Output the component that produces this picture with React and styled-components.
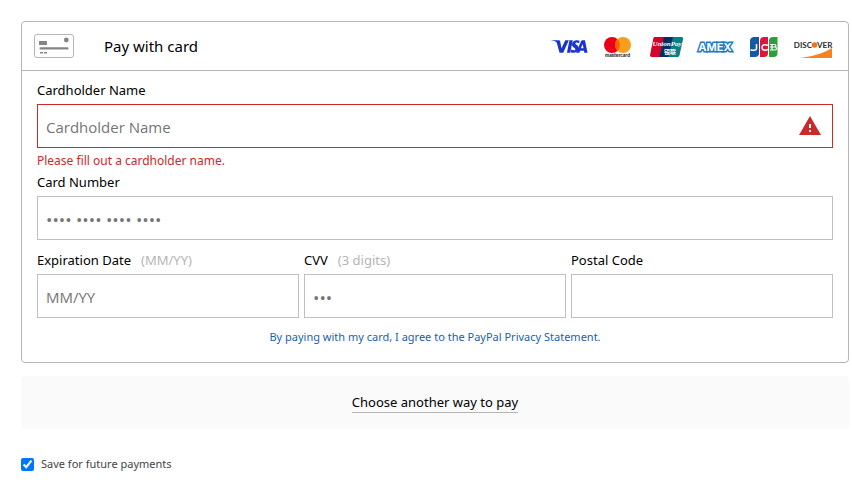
import React from 'react'
import styled, { createGlobalStyle } from 'styled-components'

const GlobalStyle = createGlobalStyle`
	* {
		box-sizing: border-box;
	}

	body {
		margin: 0;
		background: #fff;
		color: #000;
		font-family: 'Noto Sans', 'Open Sans', sans-serif;
		font-size: 13px;
	}
`

const Page = styled.main`
	padding: 21px 3px 14px 21px;
`

const Sheet = styled.form`
	border: 1px solid #b5b5b5;
	border-radius: 4px;
`

const SheetHeader = styled.header`
	display: flex;
	align-items: center;
	height: 49px;
	padding: 0 15px 0 12px;
	border-bottom: 1px solid #b5b5b5;
`

const Title = styled.h1`
	flex: 1;
	margin: 0 0 0 30px;
	font-size: 15px;
	font-weight: 400;
	line-height: 24px;
`

const Brands = styled.div`
	display: flex;
	gap: 9px;

	svg {
		display: block;
		width: 40px;
		height: 24px;
	}
`

const SheetBody = styled.div`
	padding: 11px 15px 19px;
`

const Row = styled.div`
	display: grid;
	grid-template-columns: repeat(3, 1fr);
	gap: 5px;
`

const FieldGroup = styled.div`
	margin-bottom: ${({ $tight }) => $tight ? '4px' : '12px'};
`

const Label = styled.label`
	display: flex;
	align-items: baseline;
	height: 22px;
	font-size: 13px;
	line-height: 16px;
	white-space: nowrap;
`

const Hint = styled.span`
	margin-left: 10px;
	color: #b5b5b5;
`

const InputBox = styled.div`
	position: relative;
`

const Input = styled.input`
	display: block;
	width: 100%;
	height: 44px;
	padding: 2px 8px 0;
	border: 1px solid ${({ $invalid }) => $invalid ? '#ca2a2a' : '#bfbfbf'};
	border-radius: 0;
	outline: none;
	background: #fff;
	font-family: 'Open Sans', sans-serif;
	font-size: ${({ $masked }) => $masked ? '17px' : '15px'};
	color: #000;

	&::placeholder {
		color: #757575;
		opacity: 1;
	}
`

const ErrorIcon = styled.svg`
	position: absolute;
	top: 12px;
	right: 12px;
	width: 22px;
	height: 19px;
`

const ErrorMessage = styled.div`
	padding-top: 4px;
	font-size: 12px;
	line-height: 18px;
	color: #ca2a2a;
`

const Legal = styled.div`
	font-size: 11px;
	line-height: 13px;
	text-align: center;

	a {
		color: #1a5fa8;
		text-decoration: none;
	}
`

const Toggle = styled.button`
	display: block;
	width: 100%;
	height: 53px;
	margin-top: 13px;
	padding: 0;
	border: 0;
	border-radius: 4px;
	background: #fafafa;
	color: #000;
	font-family: inherit;
	font-size: 13px;

	span {
		display: inline-block;
		line-height: 19px;
		border-bottom: 1px solid #b5b5b5;
	}
`

const SaveOption = styled.label`
	display: flex;
	align-items: center;
	gap: 7px;
	margin-top: 26px;
	font-size: 11px;
	line-height: 18px;
	color: #444;

	input {
		width: 13px;
		height: 13px;
		margin: 0;
		accent-color: #0075ff;
	}
`

const CardIcon = () => (
	<svg width='40' height='24' viewBox='0 0 40 24' aria-hidden='true'>
		<rect x='.5' y='.5' width='39' height='23' rx='2.5' fill='#fff' stroke='#b5b5b5' />
		<g fill='#858585'>
			<rect x='5' y='7' width='8' height='4' rx='.5' />
			<circle cx='32.3' cy='6' r='2.4' />
			<rect x='5.5' y='13.2' width='29' height='2.2' rx='1' />
			<path d='M6 18h3v1.4H6zM10 18h3v1.4h-3z' />
		</g>
	</svg>
)

const Visa = () => (
	<svg viewBox='0 0 42 24' role='img' aria-label='Visa'>
		<g fill='#1a35cb'>
			<path d='M3.5 6h7.600c1 0 1.500.5 1.700 1.400l1.400 7L18.100 6h3.800L16 19h-3.900L9.200 8.600C8.900 7.500 6.300 6.400 3.500 6.300z' />
			<path d='M22.500 6H26l-2.600 13h-3.500zM36 6h2.800l2.700 13h-3.300l-.4-2h-4l-.9 2h-3.500l5.200-11.800c.3-.8.8-1.200 1.400-1.200zm.4 3.900-1.800 4.400h2.700z' />
			<path d='M33.200 6.400 32.600 9c-2-.9-3.900-.7-3.900.4 0 1.200 3.400 1.600 3.400 4.800 0 4.400-4.900 5.900-8.300 4.400l.6-2.800c2.100 1.200 4.300 1 4.300-.5 0-1.600-3.500-1.700-3.500-4.900 0-4 4.700-5.400 8-4z' />
		</g>
	</svg>
)

const Mastercard = () => (
	<svg viewBox='0 0 40 24' role='img' aria-label='Mastercard'>
		<circle cx='15' cy='11' r='8' fill='#eb001b' />
		<circle cx='26' cy='11' r='8' fill='#f79e1b' />
		<path d='M20.5 5.2a8 8 0 0 1 0 11.6 8 8 0 0 1 0-11.6z' fill='#ff5f00' />
		<text x='20.5' y='23' textAnchor='middle' fontFamily='Lato' fontSize='5' fontWeight='900' fill='#231f20'>mastercard</text>
	</svg>
)

const UnionPay = () => (
	<svg viewBox='0 0 40 24' role='img' aria-label='UnionPay'>
		<path d='M9 3h11l-4.5 20H6c-1.5 0-2.2-.8-1.9-2.2L7.3 4.5C7.5 3.5 8.1 3 9 3z' fill='#d10429' />
		<path d='M18 3h10l-4.5 20h-10z' fill='#022e64' />
		<path d='M27 3h8.5c1.3 0 1.9.8 1.6 2l-3.6 16.2c-.3 1.2-1 1.8-2.2 1.8h-9z' fill='#077f84' />
		<text x='21' y='12' textAnchor='middle' fontFamily='Liberation Serif' fontSize='7' fontStyle='italic' fontWeight='700' fill='#fff'>UnionPay</text>
		<text x='24' y='20' textAnchor='middle' fontFamily='Noto Sans CJK SC' fontSize='6' fontWeight='700' fill='#fff'>银联</text>
	</svg>
)

const Amex = () => (
	<svg viewBox='0 0 40 24' role='img' aria-label='American Express'>
		<text
			x='20'
			y='17'
			textAnchor='middle'
			fontFamily='Inter'
			fontSize='11'
			fontWeight='700'
			fill='#fff'
			stroke='#1a7bc9'
			strokeWidth='3'
			paintOrder='stroke'
		>
			AMEX
		</text>
	</svg>
)

const Jcb = () => (
	<svg viewBox='0 0 40 24' role='img' aria-label='JCB'>
		<path d='M10.5 3H15v16a4 4 0 0 1-4 4H6V7a4 4 0 0 1 4.5-4z' fill='#0f5ba7' />
		<path d='M20 3h4v16a4 4 0 0 1-4 4h-4V7a4 4 0 0 1 4-4z' fill='#e0143c' />
		<path d='M29 3h4.5v16a4 4 0 0 1-4 4H25V7a4 4 0 0 1 4-4z' fill='#2c9f38' />
		<path d='M12.5 10v4.5c0 2-3.5 2.3-6 1.2M24 11.3c-2.9-1.2-6-.8-6 2.1s3.1 3.3 6 2.1' fill='none' stroke='#fff' strokeWidth='1.5' />
		<path d='M26 10.5h4.5c1.8 0 2 2.5 0 2.5H26h5c2 0 2 3 0 3h-5M28 10v6' fill='none' stroke='#fff' strokeWidth='1.2' />
	</svg>
)

const Discover = () => (
	<svg viewBox='0 0 40 24' role='img' aria-label='Discover'>
		<path d='M39 14v10H7c13-1.5 24-5.2 32-10z' fill='#f58220' />
		<g fontFamily='Lato' fontSize='8' fontWeight='700' fill='#2b2b2b'>
			<text x='19' y='14' textAnchor='end'>DISC</text>
			<text x='24' y='14'>VER</text>
		</g>
		<circle cx='21.5' cy='11' r='2.7' fill='#f47216' />
	</svg>
)

function Field({ id, label, hint, placeholder, error, masked }) {
	return (
		<FieldGroup $tight={!!error}>
			<Label htmlFor={id}>{label}{hint && <Hint>{hint}</Hint>}</Label>
			<InputBox>
				<Input
					id={id}
					name={id}
					placeholder={placeholder}
					$invalid={!!error}
					$masked={masked}
					aria-invalid={!!error}
					aria-describedby={error ? `${id}-error` : undefined}
				/>
				{error && (
					<ErrorIcon viewBox='0 0 22 19' aria-hidden='true'>
						<path d='M11 0 22 19H0z' fill='#ca2a2a' />
						<path d='M10 8h2v4h-2zM10 14h2v2h-2z' fill='#fff' />
					</ErrorIcon>
				)}
			</InputBox>
			{error && <ErrorMessage id={`${id}-error`}>{error}</ErrorMessage>}
		</FieldGroup>
	)
}

function App() {
	return (
		<Page>
			<GlobalStyle />
			<Sheet>
				<SheetHeader>
					<CardIcon />
					<Title>Pay with card</Title>
					<Brands>
						<Visa />
						<Mastercard />
						<UnionPay />
						<Amex />
						<Jcb />
						<Discover />
					</Brands>
				</SheetHeader>
				<SheetBody>
					<Field
						id='cardholder'
						label='Cardholder Name'
						placeholder='Cardholder Name'
						error='Please fill out a cardholder name.'
					/>
					<Field id='number' label='Card Number' placeholder='•••• •••• •••• ••••' masked />
					<Row>
						<Field id='expiration' label='Expiration Date' hint='(MM/YY)' placeholder='MM/YY' />
						<Field id='cvv' label='CVV' hint='(3 digits)' placeholder='•••' masked />
						<Field id='postal' label='Postal Code' />
					</Row>
					<Legal>
						<a href='#privacy'>By paying with my card, I agree to the PayPal Privacy Statement.</a>
					</Legal>
				</SheetBody>
			</Sheet>
			<Toggle type='button'><span>Choose another way to pay</span></Toggle>
			<SaveOption>
				<input type='checkbox' defaultChecked />
				Save for future payments
			</SaveOption>
		</Page>
	)
}

export default App
